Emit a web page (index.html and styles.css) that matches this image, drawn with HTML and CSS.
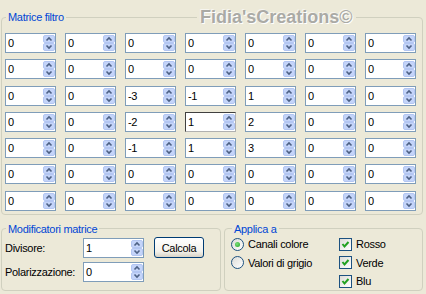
FILE: index.html
```html
<!doctype html>
<html lang="it">
<head>
    <meta charset="utf-8">
    <title>Matrice filtro</title>
    <link rel="stylesheet" href="styles.css">
</head>
<body>
    <fieldset class="grp matrix">
        <legend>Matrice filtro</legend>
        <div class="grid">
            <div class="spin"><span>0</span><b></b></div>
            <div class="spin"><span>0</span><b></b></div>
            <div class="spin"><span>0</span><b></b></div>
            <div class="spin"><span>0</span><b></b></div>
            <div class="spin"><span>0</span><b></b></div>
            <div class="spin"><span>0</span><b></b></div>
            <div class="spin"><span>0</span><b></b></div>

            <div class="spin"><span>0</span><b></b></div>
            <div class="spin"><span>0</span><b></b></div>
            <div class="spin"><span>0</span><b></b></div>
            <div class="spin"><span>0</span><b></b></div>
            <div class="spin"><span>0</span><b></b></div>
            <div class="spin"><span>0</span><b></b></div>
            <div class="spin"><span>0</span><b></b></div>

            <div class="spin"><span>0</span><b></b></div>
            <div class="spin"><span>0</span><b></b></div>
            <div class="spin"><span>-3</span><b></b></div>
            <div class="spin"><span>-1</span><b></b></div>
            <div class="spin"><span>1</span><b></b></div>
            <div class="spin"><span>0</span><b></b></div>
            <div class="spin"><span>0</span><b></b></div>

            <div class="spin"><span>0</span><b></b></div>
            <div class="spin"><span>0</span><b></b></div>
            <div class="spin"><span>-2</span><b></b></div>
            <div class="spin focus"><span>1</span><b></b></div>
            <div class="spin"><span>2</span><b></b></div>
            <div class="spin"><span>0</span><b></b></div>
            <div class="spin"><span>0</span><b></b></div>

            <div class="spin"><span>0</span><b></b></div>
            <div class="spin"><span>0</span><b></b></div>
            <div class="spin"><span>-1</span><b></b></div>
            <div class="spin"><span>1</span><b></b></div>
            <div class="spin"><span>3</span><b></b></div>
            <div class="spin"><span>0</span><b></b></div>
            <div class="spin"><span>0</span><b></b></div>

            <div class="spin"><span>0</span><b></b></div>
            <div class="spin"><span>0</span><b></b></div>
            <div class="spin"><span>0</span><b></b></div>
            <div class="spin"><span>0</span><b></b></div>
            <div class="spin"><span>0</span><b></b></div>
            <div class="spin"><span>0</span><b></b></div>
            <div class="spin"><span>0</span><b></b></div>

            <div class="spin"><span>0</span><b></b></div>
            <div class="spin"><span>0</span><b></b></div>
            <div class="spin"><span>0</span><b></b></div>
            <div class="spin"><span>0</span><b></b></div>
            <div class="spin"><span>0</span><b></b></div>
            <div class="spin"><span>0</span><b></b></div>
            <div class="spin"><span>0</span><b></b></div>
        </div>
    </fieldset>

    <div class="mark">Fidia'sCreations©</div>

    <div class="bottom">
        <fieldset class="grp mods">
            <legend>Modificatori matrice</legend>
            <div class="form">
                <label>Divisore:</label>
                <div class="spin"><span>1</span><b></b></div>
                <button class="btn">Calcola</button>
                <label>Polarizzazione:</label>
                <div class="spin"><span>0</span><b></b></div>
            </div>
        </fieldset>
        <fieldset class="grp apply">
            <legend>Applica a</legend>
            <div class="opts">
                <div class="opt r1"><i class="radio on"></i>Canali colore</div>
                <div class="opt r2"><i class="radio"></i>Valori di grigio</div>
                <div class="opt c1"><i class="chk"></i>Rosso</div>
                <div class="opt c2"><i class="chk"></i>Verde</div>
                <div class="opt c3"><i class="chk"></i>Blu</div>
            </div>
        </fieldset>
    </div>
</body>
</html>
```
FILE: styles.css
```css
*{ margin:0; padding:0; box-sizing:border-box; }
body
{
    width:426px;
    height:294px;
    padding:0 3px 0 1px;
    background:#ECE9D8;
    font:11px "Liberation Sans", Arial, sans-serif;
    letter-spacing:-0.3px;
    color:#000;
    overflow:hidden;
    position:relative;
}
.grp
{
    border:1px solid #D0D0BF;
    border-radius:4px;
    min-width:0;
}
.grp legend
{
    color:#0046D5;
    line-height:12px;
    padding:0 2px;
    margin-left:1px;
}
.matrix
{
    margin-top:11px;
    padding:10px 6px 3px 3px;
}
.grid
{
    display:grid;
    grid-template-columns:repeat(7, 51px);
    column-gap:9px;
    row-gap:6.3px;
}
.spin
{
    height:20px;
    border:1px solid #7F9DB9;
    background:#fff;
    display:flex;
}
.spin span
{
    flex:1;
    padding-left:2px;
    line-height:18px;
}
.spin b
{
    width:12px;
    margin:1px 0;
    background:url("data:image/svg+xml,%3Csvg xmlns='http://www.w3.org/2000/svg' width='12' height='16'%3E%3Crect x='.5' y='.5' width='11' height='7' rx='1.5' fill='%23C4D4F9' stroke='%23B3C6F2'/%3E%3Crect x='.5' y='8.5' width='11' height='7' rx='1.5' fill='%23C4D4F9' stroke='%23B3C6F2'/%3E%3Cpath d='M3.5 5.5L6 3L8.5 5.5' fill='none' stroke='%234D6185' stroke-width='1.6'/%3E%3Cpath d='M3.5 10.5L6 13L8.5 10.5' fill='none' stroke='%234D6185' stroke-width='1.6'/%3E%3C/svg%3E") no-repeat;
}
.spin.focus
{
    border-color:#404040 #B0B0B0 #B0B0B0 #404040;
}
.mark
{
    position:absolute;
    left:197px;
    top:7px;
    padding:0 3px;
    background:#ECE9D8;
    font:bold 18px "Liberation Sans", Arial, sans-serif;
    line-height:20px;
    letter-spacing:0;
    color:#AAAAA5;
    text-shadow:1px 1px 0 #fff, -1px -1px 0 #F6F5EF;
}
.bottom
{
    display:flex;
    gap:3px;
    margin-top:8px;
}
.mods
{
    width:220px;
    padding:3px 3px 7px 3px;
}
.form
{
    display:grid;
    grid-template-columns:78px 61px 60px;
    grid-template-rows:20px 20px;
    column-gap:0;
    row-gap:4px;
    align-items:center;
}
.btn
{
    margin-left:10px;
    height:21px;
    border:1px solid #003C74;
    border-radius:3px;
    background:linear-gradient(#FFFFFF, #F3F2EC 70%, #D8D3C6);
    font:11px "Liberation Sans", Arial, sans-serif;
    letter-spacing:-0.3px;
    color:#000;
}
.apply
{
    flex:1;
    padding:0 4px 0 6px;
}
.opts
{
    display:grid;
    grid-template-columns:108px 1fr;
    grid-template-rows:repeat(3, 18.5px);
}
.opt
{
    display:flex;
    align-items:center;
    gap:4px;
}
.r1{ grid-column:1; grid-row:1; }
.r2{ grid-column:1; grid-row:2; }
.c1{ grid-column:2; grid-row:1; }
.c2{ grid-column:2; grid-row:2; }
.c3{ grid-column:2; grid-row:3; }
.radio
{
    width:13px;
    height:13px;
    border:1px solid #1C5180;
    border-radius:50%;
    background:linear-gradient(135deg, #DCDCD7, #FFFFFF);
    display:flex;
    align-items:center;
    justify-content:center;
}
.radio.on::after
{
    content:"";
    width:5px;
    height:5px;
    border-radius:50%;
    background:radial-gradient(circle at 40% 40%, #7BE07B, #21A121);
}
.chk
{
    width:13px;
    height:13px;
    border:1px solid #1C5180;
    background:url("data:image/svg+xml,%3Csvg xmlns='http://www.w3.org/2000/svg' width='11' height='11'%3E%3Cpath d='M2.5 5L4.5 7.5L8.5 3' fill='none' stroke='%2321A121' stroke-width='2'/%3E%3C/svg%3E") no-repeat, linear-gradient(135deg, #DCDCD7, #FFFFFF);
}
```
